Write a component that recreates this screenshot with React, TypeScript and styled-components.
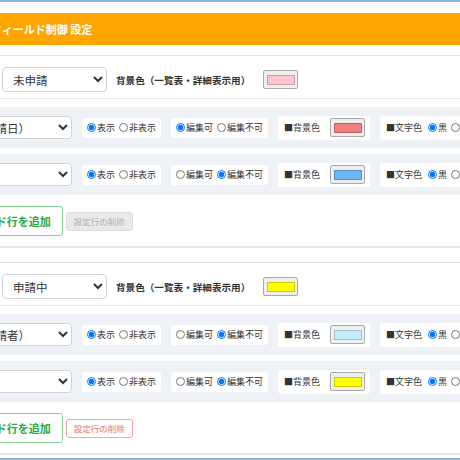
import styled, { createGlobalStyle } from "styled-components";

const GlobalStyle = createGlobalStyle`
  html, body { margin: 0; padding: 0; background: #fff; overflow: hidden; }
  body { font-family: "Noto Sans CJK JP", "Noto Sans", sans-serif; color: #333; }
`;

const Frame = styled.div`
  margin-left: -100px;
  width: 700px;
  height: 460px;
  border-top: 2px solid #8fb6d6;
  border-bottom: 2px solid #8fb6d6;
  padding-top: 11px;
  box-sizing: border-box;
`;

const Header = styled.div`
  height: 32px;
  background: #ffa500;
  color: #fff;
  font-size: 11px;
  font-weight: 700;
  line-height: 32px;
  padding-left: 91px;
`;

const Card = styled.section`
  margin-top: 10px;
  border-top: 1px solid #e2e2e2;
  border-bottom: 2px solid #e4e4e4;
  & + & { margin-top: 14px; }
`;

const CardHead = styled.div`
  display: flex;
  align-items: center;
  padding: 11px 0 6px 102px;
  border-bottom: 1px solid #ebebeb;
`;

const StatusSelect = styled.select`
  width: 105px;
  height: 25px;
  padding: 0 6px;
  font-family: inherit;
  font-size: 11.5px;
  color: #333;
  background: #fff;
  border: 1px solid #d4d4d4;
  border-radius: 4px;
`;

const HeadLabel = styled.span`
  margin-left: 9px;
  font-size: 9.6px;
  font-weight: 700;
`;

const Swatch = styled.span<{ $ml?: number }>`
  display: inline-flex;
  align-items: center;
  justify-content: center;
  margin-left: ${(p) => p.$ml ?? 8}px;
  width: 35px;
  height: 19px;
  box-sizing: border-box;
  background: #efefef;
  border: 1px solid #a9a9a9;
  border-radius: 2px;
`;

const SwatchFill = styled.span<{ $color: string }>`
  width: 28px;
  height: 10px;
  box-sizing: border-box;
  background: ${(p) => p.$color};
  border: 1px solid rgba(0, 0, 0, 0.2);
`;

const CardBody = styled.div`
  padding: 8px 0 10px 12px;
`;

const Panel = styled.div`
  display: flex;
  align-items: center;
  gap: 10px;
  height: 41px;
  padding: 0 10px;
  background: #eef1f5;
  border-radius: 3px;
  & + & { margin-top: 6px; }
`;

const FieldSelect = styled.select`
  width: 150px;
  height: 23px;
  padding: 0 6px 0 11px;
  font-family: inherit;
  font-size: 11.5px;
  color: #333;
  background: #fff;
  border: 1px solid #d4d4d4;
  border-radius: 4px;
`;

const OptionBox = styled.div<{ $h?: number }>`
  display: flex;
  align-items: center;
  height: ${(p) => p.$h ?? 20}px;
  padding: 0 5px;
  background: #fff;
  border-radius: 3px;
  font-size: 9px;
  white-space: nowrap;
`;

const Choice = styled.label`
  display: inline-flex;
  align-items: center;
  & + & { margin-left: 4px; }
`;

const Radio = styled.input.attrs({ type: "radio", readOnly: true })`
  width: 9px;
  height: 9px;
  margin: 0 1px 0 0;
`;

const BoxTitle = styled.span`
  font-size: 9px;
  margin: 0 6px 0 1px;
`;

const ButtonRow = styled.div`
  display: flex;
  align-items: center;
  gap: 3px;
  margin-top: 11px;
  padding-left: 28px;
`;

const AddButton = styled.button`
  height: 30px;
  padding: 0 11px;
  font-family: inherit;
  font-size: 11px;
  font-weight: 700;
  color: #28a745;
  background: #fff;
  border: 1px solid #86d196;
  border-radius: 3px;
`;

const DeleteButton = styled.button`
  height: 19px;
  padding: 0 7px;
  font-family: inherit;
  font-size: 8.5px;
  color: #e57373;
  background: #fff;
  border: 1px solid #f1a3a3;
  border-radius: 3px;
  &:disabled {
    color: #b0b0b0;
    background: #e9e9e9;
    border-color: #dcdcdc;
  }
`;

type Row = { field: string; show: boolean; edit: boolean; bg: string };
type Section = { status: string; bg: string; rows: Row[]; canDelete: boolean };

const sections: Section[] = [
  {
    status: "未申請",
    bg: "#ffc4cc",
    canDelete: false,
    rows: [
      { field: "申請日（申請日）", show: true, edit: true, bg: "#f08080" },
      { field: "", show: true, edit: false, bg: "#6cb6f5" },
    ],
  },
  {
    status: "申請中",
    bg: "#ffff00",
    canDelete: true,
    rows: [
      { field: "申請者（申請者）", show: true, edit: false, bg: "#c4eef8" },
      { field: "", show: true, edit: false, bg: "#ffff00" },
    ],
  },
];

function FieldRow({ row }: { row: Row }) {
  return (
    <Panel>
      <FieldSelect value={row.field} onChange={() => {}}>
        <option value={row.field}>{row.field}</option>
      </FieldSelect>
      <OptionBox>
        <Choice><Radio checked={row.show} />表示</Choice>
        <Choice><Radio checked={!row.show} />非表示</Choice>
      </OptionBox>
      <OptionBox>
        <Choice><Radio checked={row.edit} />編集可</Choice>
        <Choice><Radio checked={!row.edit} />編集不可</Choice>
      </OptionBox>
      <OptionBox $h={24}>
        <BoxTitle>■背景色</BoxTitle>
        <Swatch $ml={4}><SwatchFill $color={row.bg} /></Swatch>
      </OptionBox>
      <OptionBox $h={24}>
        <BoxTitle>■文字色</BoxTitle>
        <Choice><Radio checked />黒</Choice>
        <Choice><Radio checked={false} />白</Choice>
      </OptionBox>
    </Panel>
  );
}

export default function App() {
  return (
    <>
      <GlobalStyle />
      <Frame>
        <Header>フィールド制御 設定</Header>
        {sections.map((s) => (
          <Card key={s.status}>
            <CardHead>
              <StatusSelect value={s.status} onChange={() => {}}>
                <option value={s.status}>{s.status}</option>
              </StatusSelect>
              <HeadLabel>背景色（一覧表・詳細表示用）</HeadLabel>
              <Swatch $ml={13}><SwatchFill $color={s.bg} /></Swatch>
            </CardHead>
            <CardBody>
              {s.rows.map((r, i) => (
                <FieldRow key={i} row={r} />
              ))}
              <ButtonRow>
                <AddButton>フィールド行を追加</AddButton>
                <DeleteButton disabled={!s.canDelete}>設定行の削除</DeleteButton>
              </ButtonRow>
            </CardBody>
          </Card>
        ))}
      </Frame>
    </>
  );
}
